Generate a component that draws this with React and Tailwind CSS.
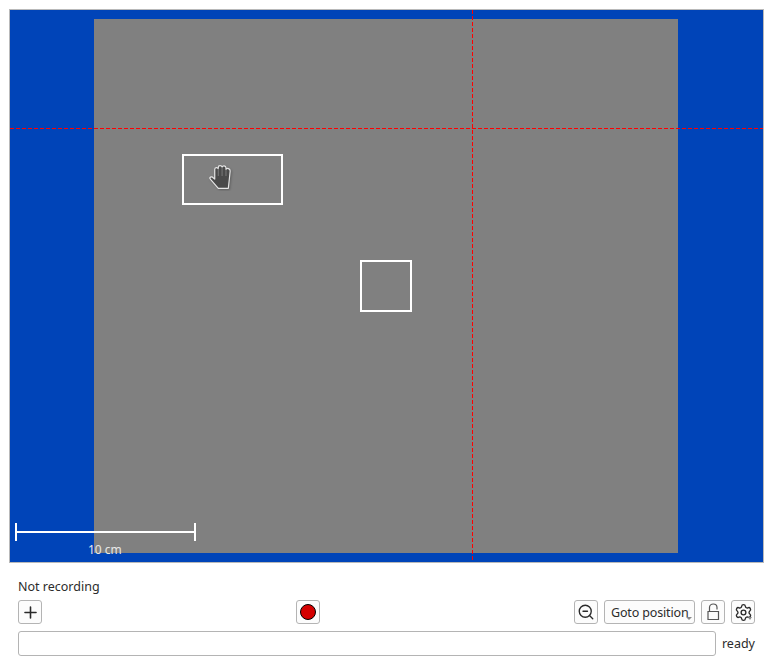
import React from "react";
import { Plus, ZoomOut, Settings } from "lucide-react";

const btn =
  "flex items-center justify-center h-[24px] w-[24px] rounded-[3px] border border-[#b4b4b4] bg-[#fcfcfc] text-[#2a2a2a]";

function HandCursor() {
  return (
    <svg width="26" height="27" viewBox="0 0 24 25" className="absolute left-[24px] top-[8px]">
      <path
        d="M2.5 14.5L1.5 13C2.5 11.5 4 11.8 5 13L6.2 14V5C6.2 2.8 8.8 2.8 9.5 4.5V3C9.5 1 12.6 1 13 3C13.5 1 16.5 1.3 16.6 3.5V5C17.5 3.5 20.5 4 20.5 6.5L19.5 16L18.8 22.5H9.5L2.5 14.5Z"
        fill="#4a4a4a"
        stroke="#e6e6e6"
        strokeWidth="1.1"
        strokeLinejoin="round"
        style={{ filter: "drop-shadow(1px 1px 1px rgba(0,0,0,0.25))" }}
      />
      <path d="M9.5 4.5V11M13 3V11M16.6 5V11" stroke="#777" strokeWidth="1" fill="none" />
    </svg>
  );
}

function LockIcon() {
  return (
    <svg width="16" height="20" viewBox="0 0 16 20" fill="none" stroke="#555" strokeWidth="1.2">
      <path d="M3 9.5H13.5V17.5H3Z" />
      <path d="M4.5 9.5V5.5C4.5 0.8 12 0.8 12 5.5V7.5" />
    </svg>
  );
}

function Canvas() {
  return (
    <div className="relative h-[554px] w-[755px] border border-[#b9b9b9] bg-[#0044b8] flex items-center overflow-hidden pl-[84px]">
      <div className="h-[534px] w-[584px] bg-[#808080]" />

      {/* crosshair */}
      <svg className="absolute left-0 top-0" width="753" height="552">
        <line x1="0" y1="118.5" x2="753" y2="118.5" stroke="#ff0000" strokeDasharray="4 2" />
        <line x1="462.5" y1="0" x2="462.5" y2="552" stroke="#ff0000" strokeDasharray="4 2" />
      </svg>

      {/* regions */}
      <div className="absolute left-[172px] top-[144px] h-[51px] w-[101px] border-2 border-white">
        <HandCursor />
      </div>
      <div className="absolute left-[350px] top-[250px] h-[52px] w-[52px] border-2 border-white" />

      {/* scale bar */}
      <svg className="absolute left-[5px] top-[512px]" width="182" height="20">
        <path d="M1 1V19M180 1V19M1 10H180" stroke="#ffffff" strokeWidth="2" fill="none" />
      </svg>
      <span className="absolute left-[78px] top-[532px] text-[12px] leading-[16px] text-[#e8e8e8]">10 cm</span>
    </div>
  );
}

export default function App() {
  return (
    <div className="h-[666px] w-[773px] bg-white pl-[9px] pt-[9px] font-['Noto_Sans',sans-serif] text-[12.5px] text-[#2c2c2c]">
      <Canvas />
      <div className="ml-[9px] mr-[18px] mt-[15px] flex flex-col">
        <div className="h-[18px] leading-[18px]">Not recording</div>
        <div className="mt-[4px] flex items-center justify-between">
          <button className={btn}>
            <Plus size={19} strokeWidth={2} />
          </button>
          <button className={btn}>
            <span className="block h-[16px] w-[16px] rounded-full border-[1.5px] border-black bg-[#d40000]" />
          </button>
          <div className="flex items-center">
            <button className={btn}>
              <ZoomOut size={18} strokeWidth={1.8} />
            </button>
            <button className="relative ml-[6px] h-[24px] w-[91px] rounded-[3px] border border-[#b4b4b4] bg-[#fcfcfc] pl-[6px] pt-[3px] text-left tracking-[-0.15px]">
              Goto position
              <span className="absolute bottom-[3px] right-[2px] h-0 w-0 border-x-[3px] border-t-[3px] border-x-transparent border-t-[#888]" />
            </button>
            <button className={`${btn} ml-[6px]`}>
              <LockIcon />
            </button>
            <button className={`${btn} relative ml-[6px]`}>
              <Settings size={19} strokeWidth={1.7} />
              <span className="absolute bottom-[3px] right-[2px] h-0 w-0 border-x-[2.5px] border-t-[3px] border-x-transparent border-t-[#888]" />
            </button>
          </div>
        </div>
        <div className="mt-[7px] flex items-center">
          <input className="h-[25px] w-[698px] rounded-[3px] border border-[#b4b4b4] bg-white" />
          <span className="ml-[6px] pt-[2px]">ready</span>
        </div>
      </div>
    </div>
  );
}
